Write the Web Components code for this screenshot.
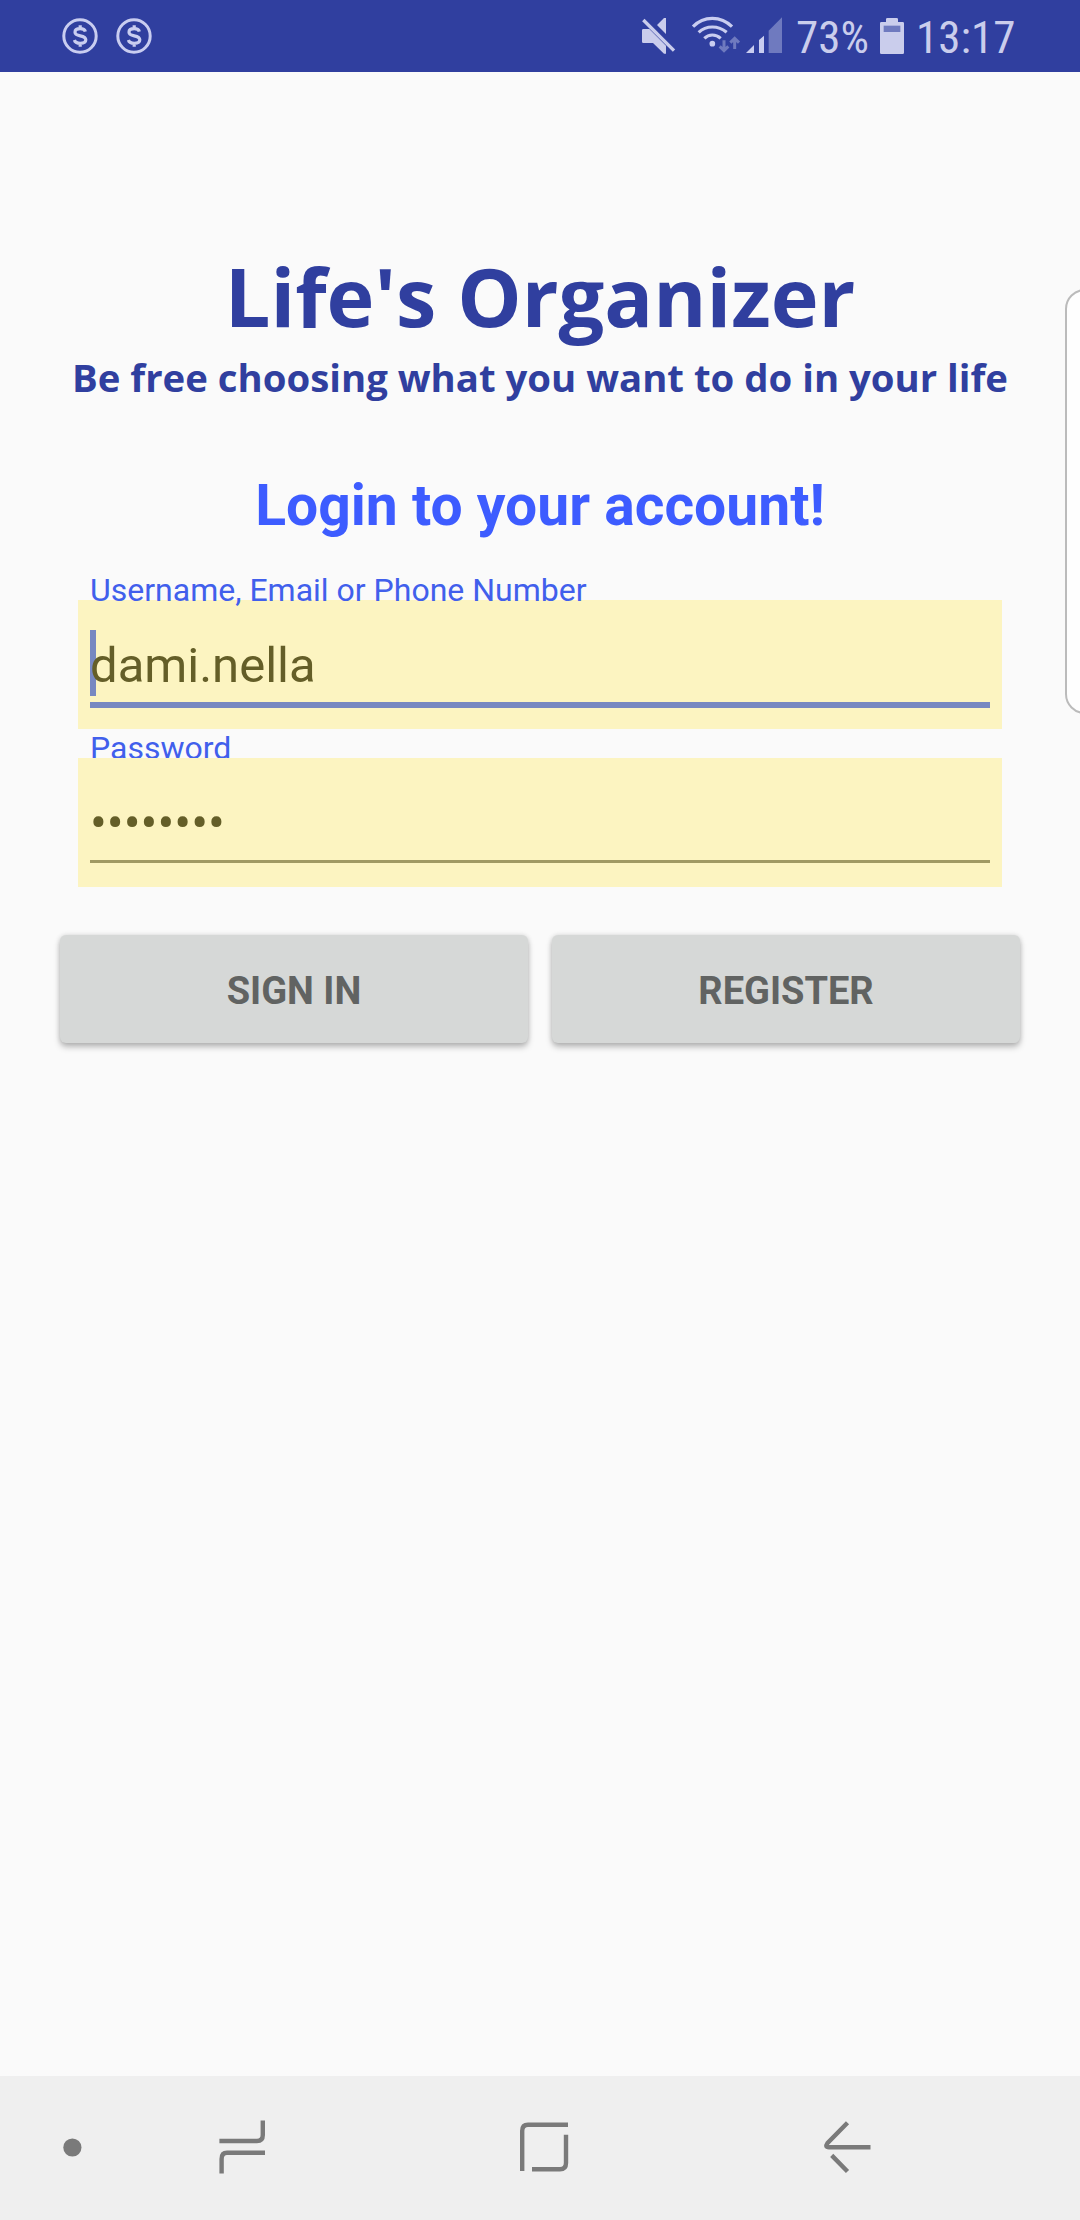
<!DOCTYPE html>
<html lang="en">
<head>
<meta charset="utf-8">
<title>Life's Organizer</title>
<style>
html,body{margin:0;padding:0;background:#fafafa}
body{width:1080px;height:2220px;overflow:hidden;font-family:Roboto,sans-serif}
</style>
</head>
<body>
<organizer-app></organizer-app>
<script>
const define = (name, html) => customElements.define(name, class extends HTMLElement {
  constructor() {
    super();
    this.attachShadow({ mode: 'open' }).innerHTML = html;
  }
});

define('coin-icon', `
<style>:host{display:block;width:36px;height:36px;margin-right:18px}svg{display:block}</style>
<svg width="36" height="36" viewBox="0 0 36 36" fill="none" stroke="#c9cdf0" stroke-width="3"><circle cx="18" cy="18" r="16.2"/><path stroke-width="3.2" d="M23.4 13.6C22.8 11.6 20.9 10.7 18.2 10.7C15 10.7 13 12 13 14.2C13 19.4 23.8 16.2 23.8 21.8C23.8 24 21.6 25.3 18.3 25.3C15.2 25.3 13 24.3 12.4 22M18.2 7.2V11M18.2 25V28.8"/></svg>
`);

define('status-bar', `
<style>
:host{display:flex;align-items:center;height:72px;background:#303f9f;color:#cacdec;box-sizing:border-box;padding-left:62px}
svg{display:block;flex:none}
.gap{flex:1}
.text{align-self:flex-start;flex:none;box-sizing:border-box;font-family:"Roboto Condensed",Roboto,sans-serif;font-size:45px;line-height:75px;height:72px;padding-left:6px;white-space:nowrap}
.battery{width:80px}
.clock{width:170px}
</style>
<coin-icon></coin-icon><coin-icon></coin-icon>
<span class="gap"></span>
<svg width="50" height="72" viewBox="30 0 150 216" fill="#cacdec"><path d="M36 91Q36 87 40 87H58L108 137V161H102L69 129H40Q36 129 36 125ZM81 75L102 54H108V102Z"/><path d="M40 60L132 152" fill="none" stroke="#cacdec" stroke-width="10"/></svg>
<svg width="100" height="72" viewBox="180 0 300 216" fill="#c9cdf0"><g fill="none" stroke="#c9cdf0" stroke-width="9.5"><path d="M189 80Q213 55 247 55T306 80M206 97Q223 81 247 81T290 97M223 115Q233 105 247 105T272 115"/></g><circle cx="247" cy="131" r="8.5"/><g fill="none" stroke="#6f7abf" stroke-width="9"><path d="M282 121V153M269 139L282 152L295 139M314 147V115M301 128L314 115L327 128"/></g><path d="M348 159L372 135V159ZM387 159V120L402 107V159Z"/><path fill="#6f7abf" d="M416 159V92L456 52V159Z"/></svg>
<span class="text battery">73%</span>
<svg width="40" height="72" viewBox="270 0 120 216" fill="#cacdec"><path d="M318 66V58Q318 54 322 54H350Q354 54 354 58V66H368Q372 66 372 70V158Q372 162 368 162H304Q300 162 300 158V70Q300 66 304 66Z"/><path fill="#6f7abf" d="M311 77H361V96H311Z"/></svg>
<span class="text clock">13:17</span>
`);

define('brand-heading', `
<style>
:host{display:block;text-align:center;color:#303f9f;font-family:"Open Sans","Noto Sans",sans-serif;font-weight:700;white-space:nowrap}
.name{font-size:81px;line-height:96px}
.motto{font-size:38.35px;line-height:56px;margin-top:5px}
</style>
<div class="name"><slot name="name"></slot></div>
<div class="motto"><slot name="motto"></slot></div>
`);

define('form-title', `
<style>:host{display:block;text-align:center;color:#3d5cff;font-weight:700;font-size:57px;line-height:68px}</style>
<slot></slot>
`);

define('text-field', `
<style>
:host{display:block;width:924px}
.label{box-sizing:border-box;height:29px;padding-left:12px;font-size:32px;line-height:38px;color:#415fec;white-space:nowrap}
:host(.cut) .label{overflow:hidden}
.box{height:129px;box-sizing:border-box;padding:30px 12px 0;background:#fcf4c1}
.value{height:66px;line-height:72px;font-size:49px;color:#645e28;position:relative}
.value ::slotted(*){position:relative}
.line{height:3px;background:#a09963;margin-top:6px}
:host(.cut) .value{font-size:50px;line-height:70px}
:host(.active) .label{position:relative;z-index:1}
:host(.active) .value::before{content:"";position:absolute;left:0;top:0;width:6px;height:66px;background:#7788c1}
:host(.active) .line{height:6px;background:#7788c1}
</style>
<div class="label"><slot name="label"></slot></div>
<div class="box"><div class="value"><slot name="value"></slot></div><div class="line"></div></div>
`);

define('action-button', `
<style>
:host{display:flex;align-items:center;justify-content:center;flex:1;height:108px;box-sizing:border-box;padding-top:3px;background:#d6d8d7;border-radius:6px;color:#616362;font-weight:700;font-size:38px;line-height:46px;box-shadow:0 4px 6px rgba(0,0,0,.26),0 0 5px rgba(0,0,0,.12)}
</style>
<slot></slot>
`);

define('edge-handle', `
<style>:host{display:block;position:absolute;left:1065px;top:289px;width:40px;height:425px;box-sizing:border-box;border:2px solid #bbb;border-radius:20px;background:#fefefe}</style>
`);

define('nav-bar', `
<style>:host{display:flex;align-items:center;height:144px;box-sizing:border-box;background:#efefef;padding:0 0 2px 63px}
svg{display:block;flex:none}
.recents{margin-left:130px}.home{margin-left:242px}.back{margin-left:244px}</style>
<svg width="19" height="19" viewBox="0 0 19 19"><circle cx="9.4" cy="9.5" r="9.1" fill="#7a7a7a"/></svg>
<svg class="recents" width="60" height="60" viewBox="212 2117 60 60" fill="none" stroke="#7a7a7a" stroke-width="4.4"><path d="M262.8 2120.5V2135Q262.8 2141 257 2141H219.4M265 2152.8H227Q221.6 2152.8 221.6 2159V2173.5"/></svg>
<svg class="home" width="60" height="60" viewBox="514 2117 60 60" fill="none" stroke="#7a7a7a" stroke-width="4.4"><path d="M522.2 2171V2131Q522.2 2124.8 528 2124.8H568M566 2134.7V2163Q566 2169.3 560 2169.3H532"/></svg>
<svg class="back" width="60" height="60" viewBox="818 2117 60 60" fill="none" stroke="#7a7a7a" stroke-width="4.4"><path d="M847.5 2122.8L827.4 2143.2Q824.5 2147.3 829 2147.3H870.5M831.7 2155.4L847.5 2171.5"/></svg>
`);

define('organizer-app', `
<style>
:host{display:flex;flex-direction:column;width:1080px;height:2220px;position:relative;overflow:hidden;background:#fafafa}
main{flex:1;display:flex;flex-direction:column;padding:176px 0 0}
form-title{margin-top:67px}
.fields{margin:31px 78px 0}
.actions{display:flex;gap:24px;padding:0 60px;margin-top:48px}
</style>
<status-bar></status-bar>
<main>
<brand-heading><span slot="name">Life's Organizer</span><span slot="motto">Be free choosing what you want to do in your life</span></brand-heading>
<form-title>Login to your account!</form-title>
<div class="fields">
<text-field class="active"><span slot="label">Username, Email or Phone Number</span><span slot="value">dami.nella</span></text-field>
<text-field class="cut"><span slot="label">Password</span><span slot="value">••••••••</span></text-field>
</div>
<div class="actions"><action-button>SIGN IN</action-button><action-button>REGISTER</action-button></div>
</main>
<nav-bar></nav-bar>
<edge-handle></edge-handle>
`);
</script>
</body>
</html>
